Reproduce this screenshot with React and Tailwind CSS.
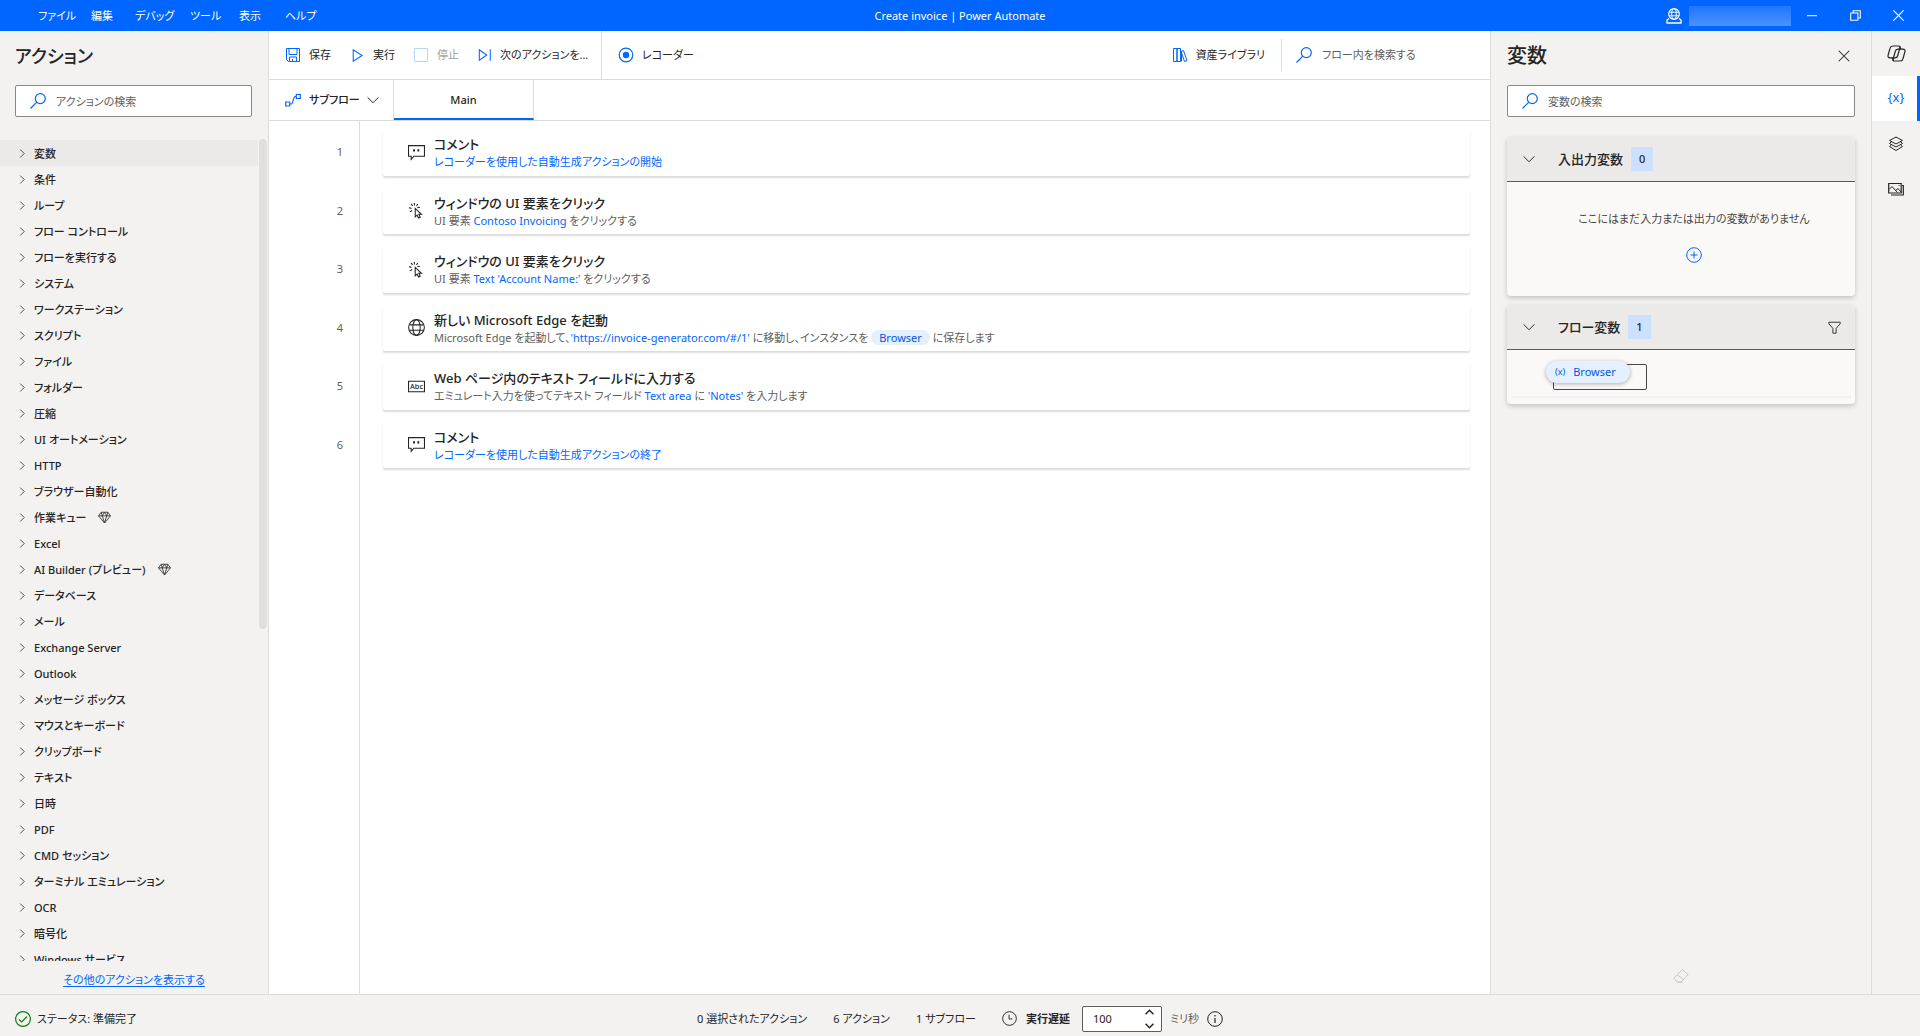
import clsx from "clsx";

const actionGroups = [
  { name: "変数" },
  { name: "条件" },
  { name: "ループ" },
  { name: "フロー コントロール" },
  { name: "フローを実行する" },
  { name: "システム" },
  { name: "ワークステーション" },
  { name: "スクリプト" },
  { name: "ファイル" },
  { name: "フォルダー" },
  { name: "圧縮" },
  { name: "UI オートメーション" },
  { name: "HTTP" },
  { name: "ブラウザー自動化" },
  { name: "作業キュー", premium: true },
  { name: "Excel" },
  { name: "AI Builder (プレビュー)", premium: true },
  { name: "データベース" },
  { name: "メール" },
  { name: "Exchange Server" },
  { name: "Outlook" },
  { name: "メッセージ ボックス" },
  { name: "マウスとキーボード" },
  { name: "クリップボード" },
  { name: "テキスト" },
  { name: "日時" },
  { name: "PDF" },
  { name: "CMD セッション" },
  { name: "ターミナル エミュレーション" },
  { name: "OCR" },
  { name: "暗号化" },
  { name: "Windows サービス" },
];

const Ref = ({ children }) => <span className="text-[#0066ff]">{children}</span>;

const steps = [
  { icon: CommentIcon, title: "コメント", detail: <Ref>レコーダーを使用した自動生成アクションの開始</Ref> },
  {
    icon: ClickIcon,
    title: "ウィンドウの UI 要素をクリック",
    detail: <>UI 要素 <Ref>Contoso Invoicing</Ref> をクリックする</>,
  },
  {
    icon: ClickIcon,
    title: "ウィンドウの UI 要素をクリック",
    detail: <>UI 要素 <Ref>Text 'Account Name:'</Ref> をクリックする</>,
  },
  {
    icon: GlobeIcon,
    title: "新しい Microsoft Edge を起動",
    detail: (
      <>
        Microsoft Edge を起動して、<Ref>'https://invoice-generator.com/#/1'</Ref> に移動し、インスタンスを{" "}
        <span className="rounded-full bg-[#e5f0ff] px-2 text-[#0058e0]">Browser</span> に保存します
      </>
    ),
  },
  {
    icon: TextFieldIcon,
    title: "Web ページ内のテキスト フィールドに入力する",
    detail: <>エミュレート入力を使ってテキスト フィールド <Ref>Text area</Ref> に <Ref>'Notes'</Ref> を入力します</>,
  },
  { icon: CommentIcon, title: "コメント", detail: <Ref>レコーダーを使用した自動生成アクションの終了</Ref> },
];

function Icon({ size = 16, className, children }) {
  return (
    <svg
      width={size}
      height={size}
      viewBox="0 0 16 16"
      fill="none"
      stroke="currentColor"
      className={clsx("shrink-0", className)}
      aria-hidden="true"
    >
      {children}
    </svg>
  );
}

function CommentIcon() {
  return (
    <Icon size={17}>
      <path d="M.5 1.500h15v10H5.500L3 14.500v-3H.5z" />
      <path d="M5.700 5v2M9.700 5v2" strokeWidth="1.800" />
    </Icon>
  );
}

function ClickIcon() {
  return (
    <Icon size={17}>
      <path d="M6.800 6v8l1.800-1.700 1.300 2.800 1.600-.8-1.300-2.700h2.500z" />
      <path d="M6 1v2.200M3 1.800l1.300 2M9.200 1.800 8 3.800M.9 5.500l2.400.5M4 8 1.600 9.300M8.800 5.500l2.400-.6" />
    </Icon>
  );
}

function GlobeIcon() {
  return (
    <Icon size={17}>
      <circle cx="8" cy="8" r="7.400" />
      <ellipse cx="8" cy="8" rx="3.500" ry="7.400" />
      <path d="M1.300 5.500h13.400M1.300 10.500h13.400" />
    </Icon>
  );
}

function TextFieldIcon() {
  return (
    <Icon size={17}>
      <path d="M.5 3h15v10H.5z" />
      <text x="8" y="10.500" textAnchor="middle" fontSize="7" fontWeight="500" fill="currentColor" stroke="none">
        Abc
      </text>
    </Icon>
  );
}

function SearchIcon() {
  return (
    <Icon className="text-[#0066ff]">
      <circle cx="10.300" cy="5.600" r="5" strokeWidth="1.200" />
      <path d="M6.800 9.200.5 15.500" strokeWidth="1.200" />
    </Icon>
  );
}

function ChevronDown() {
  return (
    <Icon size={12}>
      <path d="M.8 4.500 8 11.700l7.200-7.200" strokeWidth="1.300" />
    </Icon>
  );
}

function DiamondIcon() {
  return (
    <Icon size={13}>
      <path d="M4 1.500h8L15.400 6 8 14.800.6 6zM.6 6h14.800M5.200 6 8 14.500 10.800 6M4 1.500 5.200 6 8 1.500 10.800 6 12 1.500" />
    </Icon>
  );
}

function TitleBar() {
  return (
    <header className="grid h-[31px] grid-cols-[1fr_auto_1fr] items-center bg-[#0066ff] text-white">
      <nav className="flex pl-[38px]">
        <button className="w-[53px] text-left">ファイル</button>
        <button className="w-[44px] text-left">編集</button>
        <button className="w-[55px] text-left">デバッグ</button>
        <button className="w-[49px] text-left">ツール</button>
        <button className="w-[46px] text-left">表示</button>
        <button className="text-left">ヘルプ</button>
      </nav>
      <h1>Create invoice | Power Automate</h1>
      <div className="flex items-center justify-end">
        <Icon>
          <circle cx="8" cy="6" r="5.300" strokeWidth="1.200" />
          <ellipse cx="8" cy="6" rx="2.300" ry="5.300" />
          <path d="M3 4.200h10M3 7.800h10" />
          <path d="M3 10.500 1 12v3h14v-3l-2-1.500" strokeWidth="1.300" />
        </Icon>
        <span className="mt-px ml-[7px] h-5 w-[102px] bg-linear-to-b from-[#1f76ff] to-[#4a92ff]" />
        <button aria-label="最小化" className="flex h-[31px] w-[42px] items-center justify-center">
          <Icon size={10}>
            <path d="M0 7.500h16" strokeWidth="1.600" />
          </Icon>
        </button>
        <button aria-label="元に戻す" className="flex h-[31px] w-[44px] items-center justify-center">
          <Icon size={11}>
            <path d="M1 4.500h10.500V15H1zM4.500 4V1H15v10.500h-3" strokeWidth="1.500" />
          </Icon>
        </button>
        <button aria-label="閉じる" className="flex h-[31px] w-[43px] items-center justify-center">
          <Icon size={11}>
            <path d="m.5.5 15 15m0-15-15 15" strokeWidth="1.700" />
          </Icon>
        </button>
      </div>
    </header>
  );
}

function SearchBox({ id, label }) {
  return (
    <label
      htmlFor={id}
      className="flex h-8 items-center gap-[10px] rounded-xs border border-[#8a8886] bg-white px-[14px]"
    >
      <SearchIcon />
      <input
        id={id}
        placeholder={label}
        aria-label={label}
        className="min-w-0 flex-1 pt-px outline-none placeholder:text-[#605e5c]"
      />
    </label>
  );
}

function ActionsPanel() {
  return (
    <aside className="flex w-[269px] shrink-0 flex-col border-r border-[#dcdcdc]">
      <h2 className="px-[15px] pt-[13px] text-[18px] leading-6 font-medium">アクション</h2>
      <div className="pt-[17px] pr-4 pl-[15px]">
        <SearchBox id="action-search" label="アクションの検索" />
      </div>
      <div className="mt-[22px] flex min-h-0 flex-1">
        <ul className="min-w-0 flex-1 overflow-hidden pt-px">
          {actionGroups.map((group, i) => (
            <li key={group.name} className={clsx("mr-px h-[26px]", i === 0 && "bg-[#ebeae9]")}>
              <button className="flex h-full w-full items-center pt-px pl-[18px] text-left font-medium">
                <Icon size={9} className="mr-[7px]">
                  <path d="m4 1 7 7-7 7" strokeWidth="1.400" />
                </Icon>
                {group.name}
                {group.premium && (
                  <span className="ml-3">
                    <DiamondIcon />
                  </span>
                )}
              </button>
            </li>
          ))}
        </ul>
        <div className="mr-px h-[490px] w-2 rounded-full bg-[#e1dfdd]" />
      </div>
      <p className="flex h-[33px] items-center justify-center pt-1">
        <a href="#more" className="text-[#0066ff] underline underline-offset-2">
          その他のアクションを表示する
        </a>
      </p>
    </aside>
  );
}

function Toolbar() {
  return (
    <div className="flex h-[49px] items-center border-b border-[#dcdcdc]">
      <div className="flex items-center pl-4">
        <button className="flex w-[67px] items-center gap-2">
          <Icon className="text-[#0066ff]">
            <path d="M1.500 1.500h13v13H3.500l-2-2z" />
            <path d="M4 1.500v6h8v-6M4.500 14.500V10h7v4.500M7.500 12v2.500" />
          </Icon>
          保存
        </button>
        <button className="flex w-[61px] items-center gap-2">
          <Icon size={13} className="text-[#0066ff]">
            <path d="M1.500 1v14L12.500 8z" strokeWidth="1.300" />
          </Icon>
          実行
        </button>
        <button disabled className="flex w-[65px] items-center gap-2 text-[#a19f9d]">
          <Icon className="text-[#b8d4ff]">
            <path d="M1.500 1.500h13v13h-13z" />
          </Icon>
          停止
        </button>
        <button className="flex w-[123px] items-center gap-2">
          <Icon size={14} className="text-[#0066ff]">
            <path d="M1.500 2v12L10 8zM14 1.500v13" strokeWidth="1.200" />
          </Icon>
          次のアクションを...
        </button>
      </div>
      <div className="flex h-full items-center border-l border-[#dcdcdc] pl-4">
        <button className="flex items-center gap-2">
          <Icon className="text-[#0066ff]">
            <circle cx="8" cy="8" r="6.800" strokeWidth="1.200" />
            <circle cx="8" cy="8" r="3.200" fill="currentColor" stroke="none" />
          </Icon>
          レコーダー
        </button>
      </div>
      <button className="ml-auto flex items-center gap-2 pr-4">
        <Icon className="text-[#0066ff]">
          <path d="M1.500 1.500h3.500v13H1.500zM5 1.500h3.500v13H5zM9 4.500l2.500-1 3.500 10-2.500 1zM9.500 4.500v10" />
        </Icon>
        資産ライブラリ
      </button>
      <label htmlFor="flow-search" className="flex h-8 w-[209px] items-center gap-[10px] border-l border-[#dcdcdc] pl-[14px]">
        <SearchIcon />
        <input
          id="flow-search"
          placeholder="フロー内を検索する"
          aria-label="フロー内を検索する"
          className="min-w-0 flex-1 outline-none placeholder:text-[#605e5c]"
        />
      </label>
    </div>
  );
}

function SubflowTabs() {
  return (
    <div className="flex h-[41px] border-b border-[#dcdcdc]">
      <button className="flex w-[125px] items-center border-r border-[#dcdcdc] pl-4 font-medium">
        <Icon className="text-[#0066ff]">
          <path d="M.7 10h4v4h-4zM11.300 2.500h4v4h-4zM4.700 12h1.500c2.500 0 1.500-7.500 4-7.500h1" strokeWidth="1.200" />
        </Icon>
        <span className="ml-2 flex-1 text-left">サブフロー</span>
        <span className="mr-[14px]">
          <ChevronDown />
        </span>
      </button>
      <button className="w-[140px] border-r border-b-2 border-r-[#dcdcdc] border-b-[#0066ff] pt-[2px] font-medium">
        Main
      </button>
    </div>
  );
}

function Step({ step, number }) {
  const StepIcon = step.icon;
  return (
    <li className="flex pt-2 pb-1">
      <span className="flex w-[90px] shrink-0 items-center justify-end pr-4 text-[#605e5c]">{number}</span>
      <article className="mr-5 ml-6 flex min-w-0 flex-1 items-center rounded-xs bg-white pl-[25px] shadow-[0_2px_2px_rgba(0,0,0,0.14)]">
        <StepIcon />
        <div className="ml-[9px] min-w-0 pt-px">
          <h3 className="text-[13px] leading-[18px] font-medium">{step.title}</h3>
          <p className="truncate leading-[17px] text-[#605e5c]">{step.detail}</p>
        </div>
      </article>
    </li>
  );
}

function Workspace() {
  return (
    <main className="flex min-w-0 flex-1 flex-col bg-white">
      <Toolbar />
      <SubflowTabs />
      <div className="grid flex-1 grid-cols-[91px_1fr]">
        <div className="col-start-1 row-start-1 border-r border-[#dcdcdc]" />
        <ol className="col-span-2 col-start-1 row-start-1 grid h-[351px] grid-rows-6">
          {steps.map((step, i) => (
            <Step key={i} step={step} number={i + 1} />
          ))}
        </ol>
      </div>
    </main>
  );
}

function VariableGroup({ title, count, filter, children }) {
  return (
    <section className="rounded-sm bg-[#faf9f8] shadow-[0_2px_5px_rgba(0,0,0,0.2)]">
      <div className="flex h-[45px] items-center rounded-t-sm border-b border-[#0066ff] bg-[#ebeae9] pr-[14px] pl-4">
        <button aria-label={title} aria-expanded="true">
          <ChevronDown />
        </button>
        <h3 className="ml-[23px] text-[13px] font-medium">{title}</h3>
        <span className="ml-2 flex h-6 min-w-[22px] items-center justify-center bg-[#cce0ff] px-2 font-medium">
          {count}
        </span>
        {filter && (
          <button aria-label="フィルター" className="ml-auto">
            <Icon size={13}>
              <path d="M1 1.500h14v2L10 9v6H6V9L1 3.500z" strokeWidth="1.100" />
            </Icon>
          </button>
        )}
      </div>
      {children}
    </section>
  );
}

function VariablesPanel() {
  return (
    <aside className="flex w-[382px] shrink-0 flex-col border-x border-[#dcdcdc] px-4">
      <div className="flex items-center justify-between pt-[13px] pr-[5px]">
        <h2 className="text-[20px] leading-6 font-medium">変数</h2>
        <button aria-label="閉じる">
          <Icon size={12}>
            <path d="m1 1 14 14m0-14L1 15" strokeWidth="1.400" />
          </Icon>
        </button>
      </div>
      <div className="pt-[17px]">
        <SearchBox id="variable-search" label="変数の検索" />
      </div>
      <div className="mt-5 flex flex-col gap-[9px]">
        <VariableGroup title="入出力変数" count={0}>
          <div className="flex h-[114px] flex-col items-center pt-[29px] pl-[26px] text-[#484644]">
            <p className="leading-4">ここにはまだ入力または出力の変数がありません</p>
            <button aria-label="変数を追加" className="mt-5 text-[#0066ff]">
              <Icon>
                <circle cx="8" cy="8" r="7.300" />
                <path d="M8 4.500v7M4.500 8h7" />
              </Icon>
            </button>
          </div>
        </VariableGroup>
        <VariableGroup title="フロー変数" count={1} filter>
          <div className="px-1 pb-[6px]">
            <div className="relative h-[48px] border-b-2 border-[#f3f2f1]">
              <div className="absolute top-[14px] left-[42px] h-[26px] w-[94px] rounded-xs border border-[#484644]" />
              <button className="absolute top-[11px] left-[35px] flex h-[22px] w-[84px] items-center gap-2 rounded-full bg-[#e5f0ff] pl-[9px] text-[#0058e0] shadow-[0_1px_4px_rgba(0,0,0,0.3)]">
                <span className="text-[9px]">(x)</span>
                Browser
              </button>
            </div>
          </div>
        </VariableGroup>
      </div>
      <button aria-label="消去" className="mt-auto mb-[10px] self-center text-[#c8c6c4]">
        <Icon>
          <path d="M.8 10.200 9.500 1.500l5.700 5.200-7.500 7.500H4.500zM4.300 6.700l6.200 5M4.500 14.300h5" />
        </Icon>
      </button>
    </aside>
  );
}

function SideRail() {
  const item = "flex h-[45px] w-full items-center justify-center";
  return (
    <nav className="w-12 shrink-0">
      <button aria-label="Copilot" className={item}>
        <Icon size={19}>
          <path d="M4.800 1.700h5c1 0 1.300.7 1 1.700L9 9.900c-.3 1.200-1 1.800-2.200 1.800H2.600C1.200 11.700.5 10.800.9 9.500l1.700-6c.3-1.200 1-1.800 2.200-1.800z" />
          <path d="M11.200 14.300h-5c-1 0-1.300-.7-1-1.700L7 6.100c.3-1.200 1-1.800 2.200-1.800h4.200c1.400 0 2.100.9 1.700 2.200l-1.700 6c-.3 1.200-1 1.800-2.200 1.800z" />
          <path d="m10.500 1.700 1.200 2.600M5.500 14.300l-1.200-2.600" />
        </Icon>
      </button>
      <button
        aria-label="変数"
        className="flex h-[45px] w-full items-center justify-center border-r-3 border-[#0066ff] bg-white pb-[3px] pl-[3px] text-[13px] text-[#0066ff]"
      >
        {"{x}"}
      </button>
      <button aria-label="UI 要素" className={item}>
        <Icon>
          <path d="m8 1 6.500 3.500L8 8 1.500 4.500z" />
          <path d="M3.500 5.800 1.500 7.500 8 11l6.500-3.500-2-1.700M3.500 9l-2 1.500L8 14.500l6.500-4-2-1.500" />
        </Icon>
      </button>
      <button aria-label="画像" className={item}>
        <Icon>
          <path d="M.7 2.500h12.500v9.500H.7zM3 14h12.300V4.500H14" strokeWidth="1.200" />
          <path d="M1 8.500 4 5.500l5.500 6M7.500 9.500l2.500-2 3 3.500M10.500 4.500h1" />
        </Icon>
      </button>
    </nav>
  );
}

function StatusBar() {
  return (
    <footer className="grid h-[42px] grid-cols-[1fr_auto_1fr] items-center border-t border-[#dcdcdc] pt-[6px]">
      <div className="flex items-center gap-[6px] pl-[15px]">
        <Icon className="text-[#107c10]">
          <circle cx="8" cy="8" r="7.400" strokeWidth="1.200" />
          <path d="m4 8.500 2.700 2.500L12 5.500" strokeWidth="1.200" />
        </Icon>
        ステータス: 準備完了
      </div>
      <div className="flex items-center">
        <span className="mr-[26px]">0 選択されたアクション</span>
        <span className="mr-[26px]">6 アクション</span>
        <span className="mr-[26px]">1 サブフロー</span>
        <Icon size={15}>
          <circle cx="8" cy="8" r="7.300" />
          <path d="M7.500 4v4.500H11" />
        </Icon>
        <label htmlFor="delay" className="mr-3 ml-[9px] font-semibold">
          実行遅延
        </label>
        <span className="flex h-[26px] w-20 items-center rounded-xs border border-[#605e5c] bg-white pr-[7px] pl-[10px]">
          <input id="delay" defaultValue="100" className="min-w-0 flex-1 outline-none" />
          <span className="flex flex-col gap-1">
            <button aria-label="増やす" className="flex">
              <Icon size={9}>
                <path d="m1 11 7-7 7 7" strokeWidth="2.600" />
              </Icon>
            </button>
            <button aria-label="減らす" className="flex">
              <Icon size={9}>
                <path d="m1 5 7 7 7-7" strokeWidth="2.600" />
              </Icon>
            </button>
          </span>
        </span>
        <span className="mr-2 ml-2 text-[#605e5c]">ミリ秒</span>
        <Icon>
          <circle cx="8" cy="8" r="7.300" />
          <path d="M8 7v5M8 4v1.500" strokeWidth="1.200" />
        </Icon>
      </div>
    </footer>
  );
}

export default function App() {
  return (
    <div className="flex h-screen flex-col overflow-hidden bg-[#f3f2f1] font-['Noto_Sans','Noto_Sans_CJK_JP',sans-serif] text-[11px] leading-4 text-[#252423] [font-feature-settings:'palt']">
      <TitleBar />
      <div className="flex min-h-0 flex-1">
        <ActionsPanel />
        <Workspace />
        <VariablesPanel />
        <SideRail />
      </div>
      <StatusBar />
    </div>
  );
}
